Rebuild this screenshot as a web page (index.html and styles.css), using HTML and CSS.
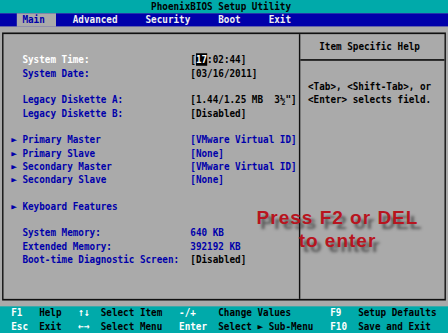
FILE: index.html
```html
<!DOCTYPE html>
<html lang="en">
<head>
    <meta charset="UTF-8">
    <meta name="viewport" content="width=device-width, initial-scale=1.0">
    <title>PhoenixBIOS Setup Utility</title>
    <link rel="stylesheet" href="styles.css">
</head>
<body>
    <div class="display">
        
        <div class="screen">
            <div class="title-bar">PhoenixBIOS Setup Utility</div>

            <div class="menu-bar">
                <span class="tab active">Main</span>
                <span class="tab">Advanced</span>
                <span class="tab">Security</span>
                <span class="tab">Boot</span>
                <span class="tab">Exit</span>
            </div>

            <div class="main-area">
                <div class="frame">
                    <div class="settings">
                        <div class="group">
                            <div class="item current"><span class="mark"></span><span class="label">System Time:</span><span class="value">[<span class="cursor">17</span>:02:44]</span></div>
                            <div class="item"><span class="mark"></span><span class="label">System Date:</span><span class="value">[03/16/2011]</span></div>
                        </div>
                        <div class="group">
                            <div class="item"><span class="mark"></span><span class="label">Legacy Diskette A:</span><span class="value">[1.44/1.25 MB  3½"]</span></div>
                            <div class="item"><span class="mark"></span><span class="label">Legacy Diskette B:</span><span class="value">[Disabled]</span></div>
                        </div>
                        <div class="group">
                            <div class="item"><span class="mark">►</span><span class="label">Primary Master</span><span class="value info">[VMware Virtual ID]</span></div>
                            <div class="item"><span class="mark">►</span><span class="label">Primary Slave</span><span class="value info">[None]</span></div>
                            <div class="item"><span class="mark">►</span><span class="label">Secondary Master</span><span class="value info">[VMware Virtual ID]</span></div>
                            <div class="item"><span class="mark">►</span><span class="label">Secondary Slave</span><span class="value info">[None]</span></div>
                        </div>
                        <div class="group">
                            <div class="item"><span class="mark">►</span><span class="label">Keyboard Features</span></div>
                        </div>
                        <div class="group">
                            <div class="item"><span class="mark"></span><span class="label">System Memory:</span><span class="value info">640 KB</span></div>
                            <div class="item"><span class="mark"></span><span class="label">Extended Memory:</span><span class="value info">392192 KB</span></div>
                            <div class="item"><span class="mark"></span><span class="label">Boot-time Diagnostic Screen:</span><span class="value">[Disabled]</span></div>
                        </div>
                    </div>

                    <div class="help">
                        <div class="help-title">Item Specific Help</div>
                        <p class="help-text">&lt;Tab&gt;, &lt;Shift-Tab&gt;, or<br>&lt;Enter&gt; selects field.</p>
                    </div>
                </div>
            </div>

            <div class="key-bar">
                <span class="key">F1</span><span class="desc">Help</span>
                <span class="key">↑↓</span><span class="desc">Select Item</span>
                <span class="key">-/+</span><span class="desc">Change Values</span>
                <span class="key">F9</span><span class="desc">Setup Defaults</span>
                <span class="key">Esc</span><span class="desc">Exit</span>
                <span class="key">←→</span><span class="desc">Select Menu</span>
                <span class="key">Enter</span><span class="desc">Select ► Sub-Menu</span>
                <span class="key">F10</span><span class="desc">Save and Exit</span>
            </div>
        </div>
    </div>

    <div class="promo">Press F2 or DEL<br>to enter</div>
</body>
</html>
```

FILE: styles.css
```css
html {
    overflow: hidden;
}
body {
    margin: 0;
    width: 448px;
    height: 333px;
    overflow: hidden;
    position: relative;
    background-color: #aaaaaa;
}
.display {
    width: 448px;
    height: 333px;
    overflow: hidden;
}
.screen {
    width: 640px;
    height: 400px;
    font-family: "DejaVu Sans Mono", "Liberation Mono", monospace;
    font-size: 13.29px;
    font-weight: bold;
    line-height: 16px;
    transform: scale(0.7, 0.8325);
    transform-origin: 0 0;
}
.title-bar {
    height: 16px;
    padding-left: 27ch;
    background-color: #00aaaa;
    color: #000;
}
.menu-bar {
    display: flex;
    height: 16px;
    padding-left: 3ch;
    background-color: #0000aa;
    color: #f0f0f0;
}
.tab {
    margin-right: 5ch;
}
.tab.active {
    padding: 0 2ch 0 1ch;
    margin-right: 3ch;
    background-color: #aaaaaa;
    color: #0000aa;
}
.main-area {
    height: 336px;
    box-sizing: border-box;
    padding: 7px 3px 0;
    background-color: #aaaaaa;
}
.frame {
    height: 322px;
    box-sizing: border-box;
    border: 2px solid #101010;
    display: grid;
    grid-template-columns: 424px 1fr;
}
.settings {
    border-right: 2px solid #101010;
    padding: 23px 0 0 11px;
    color: #0000aa;
}
.group + .group {
    margin-top: 16px;
}
.item {
    display: flex;
    height: 16px;
    white-space: pre;
}
.item .mark {
    width: 2ch;
}
.item .label {
    width: 30ch;
}
.item .value {
    color: #000;
}
.item .value.info {
    color: #0000aa;
}
.item.current .label {
    color: #fff;
}
.cursor {
    background-color: #000;
    color: #fff;
}
.help {
    color: #000;
}
.help-title {
    padding: 7px 0 7px 27px;
    border-bottom: 2px solid #101010;
}
.help-text {
    margin: 0;
    padding: 23px 0 0 11px;
}
.key-bar {
    display: grid;
    grid-template-columns: 5ch 7ch 4ch 14ch 7ch 20ch 5ch 1fr;
    grid-auto-rows: 16px;
    height: 32px;
    padding-left: 2ch;
    background-color: #00aaaa;
    white-space: pre;
}
.key-bar .key {
    color: #fff;
}
.key-bar .desc {
    color: #000;
}
.promo {
    position: absolute;
    left: 237px;
    top: 206px;
    width: 201px;
    text-align: center;
    font-family: "Liberation Sans", Arial, sans-serif;
    font-size: 19px;
    font-weight: bold;
    line-height: 23px;
    letter-spacing: 1px;
    color: #b8141e;
    text-shadow: 4px 5px 3px rgba(30, 30, 30, 0.6);
}
```
